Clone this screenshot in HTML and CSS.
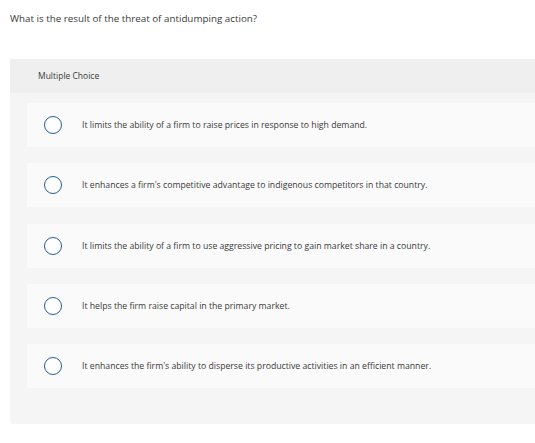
FILE: index.html
```html
<!DOCTYPE html>
<html lang="en">
<head>
  <meta charset="UTF-8" />
  <title>Multiple Choice</title>
  <link rel="stylesheet" href="styles.css">
</head>
<body>

  <p class="question">What is the result of the threat of antidumping action?</p>

  <div class="panel">
    <div class="panel-head">Multiple Choice</div>
    <div class="panel-body">
      <label class="option">
        <span class="radio"></span>
        <span class="option-text">It limits the ability of a firm to raise prices in response to high demand.</span>
      </label>
      <label class="option">
        <span class="radio"></span>
        <span class="option-text">It enhances a firm's competitive advantage to indigenous competitors in that country.</span>
      </label>
      <label class="option">
        <span class="radio"></span>
        <span class="option-text">It limits the ability of a firm to use aggressive pricing to gain market share in a country.</span>
      </label>
      <label class="option">
        <span class="radio"></span>
        <span class="option-text">It helps the firm raise capital in the primary market.</span>
      </label>
      <label class="option">
        <span class="radio"></span>
        <span class="option-text">It enhances the firm's ability to disperse its productive activities in an efficient manner.</span>
      </label>
    </div>
  </div>

</body>
</html>
```

FILE: styles.css
```css
body { margin: 0; background: #fff; color: #3a3a3a; font-family: "Open Sans", "Liberation Sans", sans-serif; }
.question { margin: 0; padding: 13px 10px 0; font-size: 9.8px; line-height: 12px; height: 46px; }
.panel { margin-left: 10px; background: #f5f5f5; border-radius: 0 0 0 3px; }
.panel-head { background: #efefef; height: 34px; padding-left: 28px; font-size: 8.5px; line-height: 34px; }
.panel-body { padding: 10px 0 36px 17px; display: flex; flex-direction: column; gap: 16.25px; }
.option { display: flex; align-items: center; height: 44px; background: #fafafa; padding-left: 17px; font-size: 8.7px; }
.radio { width: 16px; height: 16px; border: 1.5px solid #1f5e9c; border-radius: 50%; background: #fff; flex: none; margin-right: 20px; }
```
